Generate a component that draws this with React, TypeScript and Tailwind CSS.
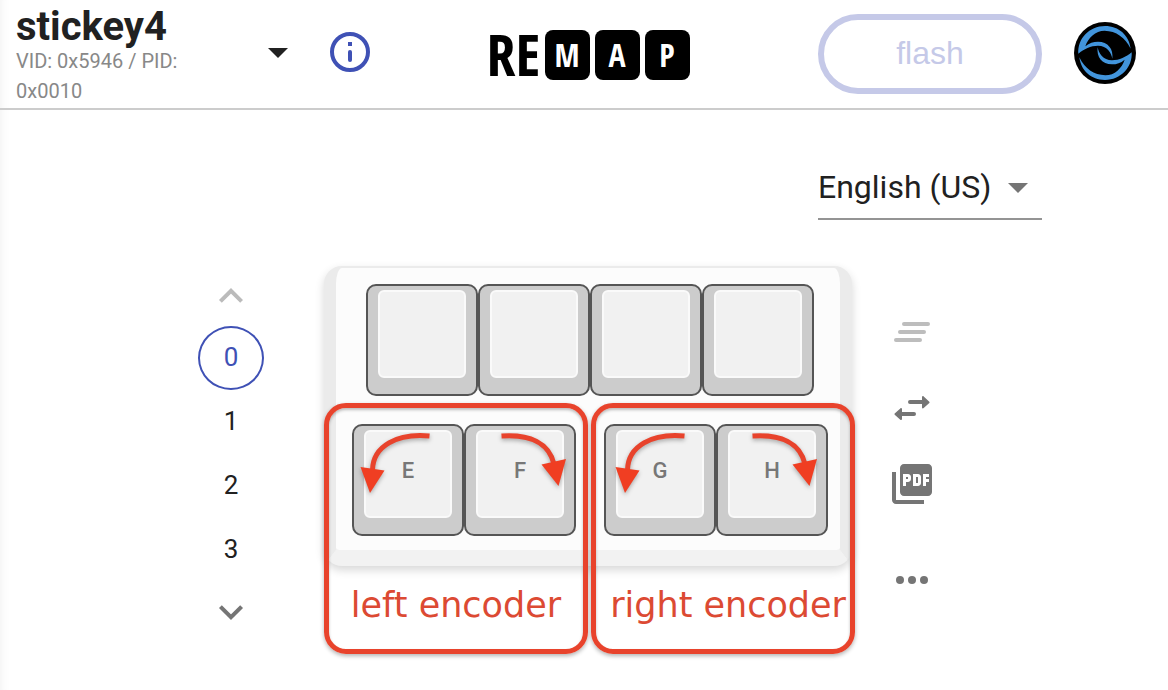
import React from "react";
import { MdPictureAsPdf } from "react-icons/md";

const layers = [0, 1, 2, 3];

function Key({ label }: { label?: string }) {
  return (
    <button
      type="button"
      aria-label={label ?? "Unassigned key"}
      className="flex size-28 items-start justify-center rounded-[10px] border-2 border-[#555] bg-[#cccccc] pt-1"
    >
      <span className="flex size-[88px] items-center justify-center rounded-md border-2 border-[#fafafa] bg-[#f1f1f1] pb-1.5 text-[22px] leading-6 font-medium text-[#777]">
        {label}
      </span>
    </button>
  );
}

function Chevron({ up }: { up?: boolean }) {
  return (
    <svg viewBox="0 0 24 24" className="size-12" fill="none" stroke="currentColor" strokeWidth="2">
      <path d={up ? "M6.7 14.7 12 9.4l5.3 5.3" : "M6.7 9.3l5.3 5.3 5.3-5.3"} />
    </svg>
  );
}

function Caret() {
  return (
    <svg viewBox="0 0 20 10" className="h-[10px] w-5 shrink-0" fill="currentColor" aria-hidden="true">
      <path d="M0 0h20L10 10z" />
    </svg>
  );
}

function Avatar() {
  return (
    <svg viewBox="24 24 186 186" className="size-[62px]" role="img" aria-label="Account">
      <circle cx="117" cy="117" r="93" fill="#000" />
      {[0, 180].map((turn) => (
        <path
          key={turn}
          transform={`rotate(${turn} 117 117)`}
          fill="#4295dc"
          d="M37 119C34 74 70 36 117 36c42 0 72 28 77 68C178 70 150 51 116 50 88 50 66 72 58 97c12-10 24-14 38-14 30 0 47 22 43 51-3-18-16-39-43-39-22 0-42 10-59 24z"
        />
      ))}
    </svg>
  );
}

function Logo() {
  return (
    <a href="#home" aria-label="Remap" className="flex items-start font-['Open_Sans_Condensed','Roboto_Condensed',sans-serif] font-bold text-black">
      <span className="w-[58px] text-[58px] leading-[48px]">RE</span>
      <span className="flex gap-[5px]">
        {["M", "A", "P"].map((letter) => (
          <span
            key={letter}
            className="flex h-[50px] w-[45px] items-center justify-center rounded-lg bg-black text-[32px] leading-8 text-white"
          >
            {letter}
          </span>
        ))}
      </span>
    </a>
  );
}

function Header() {
  return (
    <header className="grid h-[110px] grid-cols-[1fr_auto_1fr] items-start border-b-2 border-[#cccccc] pl-2">
      <div className="flex items-start pl-2">
        <button type="button" className="flex w-[272px] items-start justify-between text-left">
          <span className="flex w-[200px] flex-col pt-2">
            <span className="text-[40px] leading-[38px] font-bold text-[#212121]">stickey4</span>
            <span className="text-[20px] leading-[30px] text-[#888]">VID: 0x5946 / PID: 0x0010</span>
          </span>
          <span className="pt-12 text-[#212121]">
            <Caret />
          </span>
        </button>
        <button type="button" aria-label="Keyboard information" className="ml-[38px] pt-7 text-[#3f51b5]">
          <svg viewBox="0 0 48 48" className="size-12" fill="none" stroke="currentColor" strokeWidth="4">
            <circle cx="24" cy="24" r="18" />
            <path d="M24 24v8" strokeLinecap="round" />
            <path d="M24 14v4" />
          </svg>
        </button>
      </div>
      <div className="pt-[30px]">
        <Logo />
      </div>
      <div className="flex items-center justify-end gap-8 pt-[14px] pr-8">
        <button
          type="button"
          disabled
          className="h-20 w-56 rounded-full border-6 border-[#c5c9e8] pb-0.5 font-['Liberation_Sans',sans-serif] text-[32px] leading-9 text-[#c5c9e8]"
        >
          flash
        </button>
        <button type="button" className="pb-0.5">
          <Avatar />
        </button>
      </div>
    </header>
  );
}

function LayerPicker() {
  return (
    <nav aria-label="Layers" className="flex w-[66px] flex-col items-center text-[26px] leading-8 text-[#212121]">
      <button type="button" aria-label="Previous layer" disabled className="flex h-15 items-center text-[#bbb]">
        <Chevron up />
      </button>
      {layers.map((layer) => (
        <button
          key={layer}
          type="button"
          className={
            layer === 0
              ? "h-16 w-[66px] rounded-[50%] border-2 border-[#3f51b5] pb-0.5 text-[#3f51b5]"
              : "h-16 w-[66px] pb-0.5"
          }
        >
          {layer}
        </button>
      ))}
      <button type="button" aria-label="Next layer" className="flex h-15 items-center text-[#757575]">
        <Chevron />
      </button>
    </nav>
  );
}

function EncoderMark({ text, side }: { text: string; side: "left" | "right" }) {
  return (
    <div
      className={
        "pointer-events-none absolute top-[137px] flex h-[251px] w-[264px] items-end rounded-[22px] border-5 border-[#e8432c] pb-[22px] font-['DejaVu_Sans',sans-serif] text-[35px] leading-[44px] whitespace-nowrap text-[#dc4a33] shadow-[0_2px_4px_rgba(0,0,0,0.3),inset_0_2px_3px_rgba(0,0,0,0.25)] " +
        (side === "left" ? "left-0 justify-center" : "left-[267px] justify-end pr-1")
      }
    >
      {text}
    </div>
  );
}

function Arrows() {
  return (
    <svg
      viewBox="324 266 528 388"
      className="pointer-events-none absolute top-0 left-0 h-[388px] w-[528px] drop-shadow-[0_2px_2px_rgba(0,0,0,0.3)]"
      fill="none"
      aria-hidden="true"
    >
      {[0, 255].map((x) => (
        <g key={x} transform={`translate(${x} 0)`}>
          <path d="M429.500 436C397 433 373 446 372.500 470" stroke="#e8432c" strokeWidth="5" />
          <path d="M360.500 467l24 3.500-14.500 22.500z" fill="#f03e22" />
        </g>
      ))}
      {[0, 251].map((x) => (
        <g key={x} transform={`translate(${x} 0)`}>
          <path d="M501.500 436C530 434 549 443 554 464" stroke="#e8432c" strokeWidth="5" />
          <path d="M541.500 464.500l24.500-5.500-7.500 27z" fill="#f03e22" />
        </g>
      ))}
    </svg>
  );
}

function Keyboard() {
  return (
    <div className="relative w-[528px]">
      <div className="flex h-[300px] flex-col gap-7 rounded-[18px] border-x-12 border-t-2 border-b-16 border-x-[#ebebeb] border-t-[#ebebeb] border-b-[#f2f2f2] bg-[#fcfcfc] pt-4 pl-1 shadow-[0_4px_10px_rgba(0,0,0,0.16)]">
        <div className="flex justify-center">
          <Key />
          <Key />
          <Key />
          <Key />
        </div>
        <div className="flex justify-center gap-7">
          <div className="flex">
            <Key label="E" />
            <Key label="F" />
          </div>
          <div className="flex">
            <Key label="G" />
            <Key label="H" />
          </div>
        </div>
      </div>
      <EncoderMark text="left encoder" side="left" />
      <EncoderMark text="right encoder" side="right" />
      <Arrows />
    </div>
  );
}

function Tools() {
  return (
    <div className="flex flex-col gap-7 pt-[42px] text-[#757575]">
      <button type="button" aria-label="Clear all" disabled className="text-[#bdbdbd]">
        <svg viewBox="0 0 48 48" className="size-12" stroke="currentColor" strokeWidth="4" strokeLinecap="round">
          <path d="M16 16h24M12 24h24M8 32h24" />
        </svg>
      </button>
      <button type="button" aria-label="Import and export">
        <svg viewBox="0 0 48 48" className="size-12" fill="currentColor">
          <path d="M22 18h14M12 30h14" stroke="currentColor" strokeWidth="4" strokeLinecap="round" />
          <path d="M34 13.200c0-1.200 1-1.400 1.700-.7l5.600 5.300q.6.600 0 1.200l-5.600 5c-.7.700-1.700.5-1.700-.6zM14 25.200c0-1.200-1-1.400-1.700-.7l-5.600 5q-.6.600 0 1.200l5.600 5c.7.700 1.700.5 1.700-.6z" />
        </svg>
      </button>
      <button type="button" aria-label="Download as PDF">
        <MdPictureAsPdf className="size-12" />
      </button>
      <button type="button" aria-label="More options" className="mt-5">
        <svg viewBox="0 0 48 48" className="size-12" fill="currentColor">
          <circle cx="12" cy="24" r="4" />
          <circle cx="24" cy="24" r="4" />
          <circle cx="36" cy="24" r="4" />
        </svg>
      </button>
    </div>
  );
}

export default function App() {
  return (
    <div className="min-h-screen bg-white font-['Roboto',sans-serif] shadow-[inset_12px_0_10px_-10px_rgba(0,0,0,0.05)]">
      <Header />
      <main className="pl-2">
        <div className="flex justify-end pt-12 pr-[126px]">
          <label className="flex h-[62px] w-56 items-center border-b-2 border-[#949494] text-[#757575]">
            <select
              aria-label="Keyboard layout language"
              className="w-[190px] appearance-none bg-transparent pb-0.5 text-[32px] leading-10 text-[#212121] outline-none"
            >
              <option>English (US)</option>
            </select>
            <Caret />
          </label>
        </div>
        <div className="grid grid-cols-[1fr_auto_1fr] pt-[46px] pb-9">
          <div className="flex justify-end pr-15">
            <LayerPicker />
          </div>
          <Keyboard />
          <div className="flex pl-9">
            <Tools />
          </div>
        </div>
      </main>
    </div>
  );
}
